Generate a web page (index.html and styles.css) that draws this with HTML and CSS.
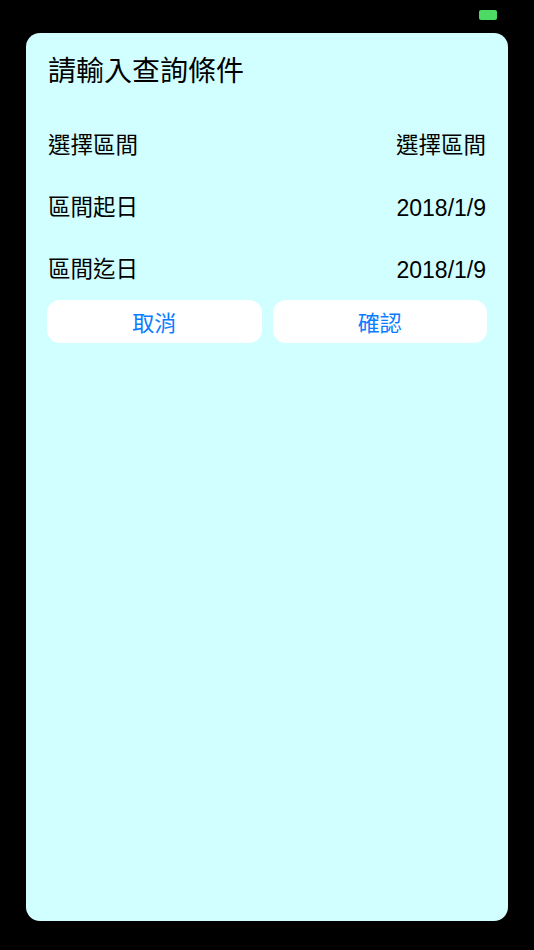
FILE: index.html
```html
<!DOCTYPE html>
<html lang="zh-Hant">
<head>
<meta charset="utf-8">
<title>請輸入查詢條件</title>
<link rel="stylesheet" href="styles.css">
</head>
<body>
<div class="status-bar"><span class="battery"></span></div>
<div class="card">
  <h1 class="title">請輸入查詢條件</h1>
  <div class="row"><span class="label">選擇區間</span><span class="label">選擇區間</span></div>
  <div class="row"><span class="label">區間起日</span><span class="value">2018/1/9</span></div>
  <div class="row"><span class="label">區間迄日</span><span class="value">2018/1/9</span></div>
  <div class="actions">
    <button class="btn">取消</button>
    <button class="btn">確認</button>
  </div>
</div>
</body>
</html>
```
FILE: styles.css
```css
html, body {
  margin: 0;
  padding: 0;
  background: #000;
  height: 950px;
  overflow: hidden;
}
body {
  font-family: "Noto Sans CJK TC", sans-serif;
  color: #000;
}
.status-bar {
  height: 33px;
  box-sizing: border-box;
  display: flex;
  justify-content: flex-end;
  align-items: flex-start;
  padding: 10px 37px 0 0;
}
.battery {
  display: block;
  width: 18px;
  height: 10px;
  border-radius: 2px;
  background: #4cd964;
}
.card {
  margin: 0 26px;
  height: 888px;
  background: #d1ffff;
  border-radius: 14px;
  box-sizing: border-box;
}
.title {
  margin: 0;
  padding: 16px 22px 25px;
  font-size: 28px;
  font-weight: normal;
  line-height: 40px;
}
.row {
  height: 62px;
  display: flex;
  align-items: center;
  justify-content: space-between;
  padding: 0 22px;
}
.label {
  font-size: 22.5px;
  line-height: 28px;
  position: relative;
  top: -2px;
}
.value {
  font-family: "Liberation Sans", sans-serif;
  font-size: 23px;
  line-height: 28px;
  position: relative;
  top: 1px;
}
.actions {
  display: flex;
  gap: 11px;
  padding: 0 21px;
}
.btn {
  flex: 1;
  height: 43px;
  border: none;
  border-radius: 13px;
  background: #fff;
  color: #0a7cff;
  font-family: "Noto Sans CJK TC", sans-serif;
  font-size: 22px;
  line-height: 28px;
  padding: 0 0 2px;
}
```
